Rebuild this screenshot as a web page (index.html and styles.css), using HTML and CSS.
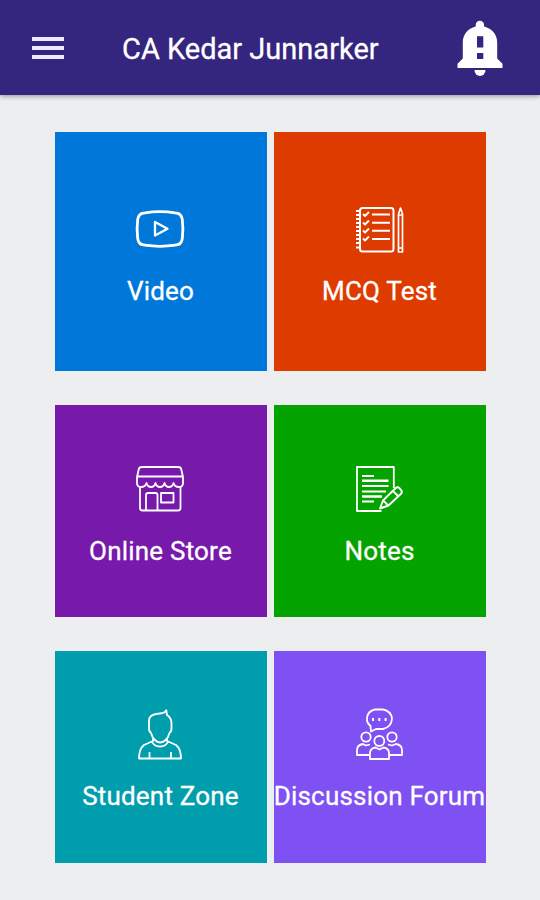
FILE: index.html
```html
<!DOCTYPE html>
<html lang="en">
<head>
  <meta charset="UTF-8">
  <meta name="viewport" content="width=device-width, initial-scale=1.0">
  <title>CA Kedar Junnarker</title>
  <link rel="stylesheet" href="styles.css">
</head>
<body>
  <header class="app-bar">
    <button class="menu-btn" aria-label="Menu">
      <span></span>
      <span></span>
      <span></span>
    </button>
    <h1 class="title">CA Kedar Junnarker</h1>
    <svg class="bell" viewBox="0 0 46 56" fill="#fff">
      <path d="M18.700 6.500V5a4.200 4.200 0 0 1 8.400 0v1.500C35 8.500 40.200 14.500 40.200 22.500v16l5.300 5.300v4.200H.5v-4.200l5.300-5.300v-16C5.800 14.500 10.800 8.500 18.700 6.500z"/>
      <path d="M17.500 50h11a5.500 6 0 0 1-11 0z"/>
      <path fill="#34257f" d="M20 16.300h6.300v11.200H20zM20 33h6.300v6H20z"/>
    </svg>
  </header>

  <main class="tiles">
    <a class="tile video">
      <svg class="icon" viewBox="0 0 80 70">
        <path stroke-width="2.800" d="M25 17.800Q40 15.600 55 17.800Q61.500 18 62.300 24.500Q63.500 34 62.300 43.500Q61.500 50 55 50.200Q40 52.400 25 50.200Q18.500 50 17.700 43.500Q16.500 34 17.700 24.500Q18.500 18 25 17.800z"/>
        <path stroke-width="2.300" d="M35 27v13.500l12.500-6.800z"/>
      </svg>
      <span class="label">Video</span>
    </a>

    <a class="tile mcq">
      <svg class="icon" viewBox="0 0 80 70">
        <rect x="20" y="13" width="33.500" height="43.500" rx="2.500" stroke-width="2"/>
        <path stroke-width="1.900" d="M16 16h5M16 20h5M16 24h5M16 28h5M16 32h5M16 36h5M16 40h5M16 44h5M16 48h5M16 52.500h5"/>
        <path stroke-width="1.900" d="M23 19l2 2 4-4M23 27.500l2 2 4-4M23 35.500l2 2 4-4M23 43.500l2 2 4-4M32 19.500h18M32 27.700h18M32 35.700h18M32 44h18"/>
        <path stroke-width="1.700" d="M58.500 57V19l2-6 2 6v38zM58.500 20h4M58.500 53h4"/>
      </svg>
      <span class="label">MCQ Test</span>
    </a>

    <a class="tile store">
      <svg class="icon" viewBox="0 0 80 70">
        <path d="M22 12h36q3 0 3.300 2.500L63 22v6q0 4-4 4-4.500 0-5.500-4-1 4-4.500 4t-4.500-4q-1 4-4.500 4t-4.500-4q-1 4-4.500 4t-4.500-4q-1 4-5.500 4-4 0-4-4v-6l1.700-7.500Q19 12 22 12zM17 21.500h46"/>
        <path d="M20 32v21q0 2.500 2.500 2.500H58q2.500 0 2.500-2.500V32M26 55V40q0-2 2-2h7.500q2 0 2 2v15M41 38h12.500v9.500H41z"/>
      </svg>
      <span class="label">Online Store</span>
    </a>

    <a class="tile notes">
      <svg class="icon" viewBox="0 0 80 70">
        <path d="M53.800 33V12H17v44h24.500"/>
        <path stroke-width="1.800" d="M22 21h12M22 31h26.500M22 36.500h24M22 46.500h12"/>
        <path stroke-width="2.600" d="M22 25.700h26.500M22 41.500h20"/>
        <path stroke-width="1.900" d="M40 53.500l3-8 12.500-12.200q2-2 4.200.2l1.300 1.300q1.700 2 0 4L48.500 50.500zM43 45.500l5.500 5M53 36l5.500 5.500"/>
      </svg>
      <span class="label">Notes</span>
    </a>

    <a class="tile student">
      <svg class="icon" viewBox="0 0 80 70">
        <path d="M29 27v-6q0-6 7-7 4-.5 7-1 2-.5 3.300-2.800L47 15q4.500 3 4.500 8v4q.5 4-2 6-1 4.500-4.500 7.500-5 4-9.500 0-3.500-3-4.500-7.500-2.500-2-2-6z"/>
        <path d="M33 38.500v2.500L24 45q-5 4-5 13.500h42q0-9.500-5-13.500l-9-4v-2.500M32 41.500q2 5 8 5t8-5M29.500 52v6M51 52v6"/>
      </svg>
      <span class="label">Student Zone</span>
    </a>

    <a class="tile forum">
      <svg class="icon" viewBox="0 0 80 70">
        <path d="M31 31.500l-.5-5.500q-4-3.500-3.500-7.500.5-7.500 8-9h8q8 1.500 9 9-.5 8.500-9 10.500h-7z"/>
        <path stroke-width="2" d="M33 18v3M39.300 18v3M45.600 18v3"/>
        <circle cx="26" cy="37" r="4.700"/>
        <circle cx="52" cy="37" r="4.700"/>
        <circle cx="39.300" cy="41" r="5"/>
        <path d="M30 55H17v-5q0-5 6-6l3 1.500 4-1M48.500 55H62v-5q0-5-6-6l-4 1.500-4-1M30 59v-6q0-4.500 5.500-5.500l4 2 4-2q5.500 1 5.500 5.500v6z"/>
      </svg>
      <span class="label">Discussion Forum</span>
    </a>
  </main>
</body>
</html>
```

FILE: styles.css
```css
* {
  box-sizing: border-box;
}

body {
  margin: 0;
  min-height: 900px;
  background-color: #eceef0;
  font-family: Roboto, sans-serif;
  color: #fff;
}

.app-bar {
  display: flex;
  align-items: center;
  height: 95px;
  padding: 0 37px 0 32px;
  background-color: #34257f;
  box-shadow: 0 1px 5px rgba(0, 0, 0, 0.4);
}

.menu-btn {
  display: flex;
  flex-direction: column;
  gap: 5px;
  width: 32px;
  padding: 0;
  border: 0;
  background: none;
}

.menu-btn span {
  height: 4px;
  background-color: #eeeaff;
}

.title {
  margin: 2px 0 0 58px;
  font-size: 29px;
  font-weight: 400;
  line-height: 36px;
  white-space: nowrap;
  -webkit-text-stroke: 0.3px #fff;
}

.bell {
  width: 46px;
  height: 56px;
  margin-left: auto;
}

.tiles {
  display: grid;
  grid-template-columns: 212px 212px;
  grid-template-rows: 239px 212px 212px;
  gap: 34px 7px;
  justify-content: center;
  padding-top: 37px;
}

.tile {
  display: flex;
  flex-direction: column;
  align-items: center;
  justify-content: center;
}

.icon {
  width: 80px;
  height: 70px;
  fill: none;
  stroke: #fff;
  stroke-width: 1.8;
  stroke-linejoin: round;
}

.tile:nth-child(odd) .icon {
  margin-right: 2px;
}

.label {
  margin-top: 11px;
  padding-bottom: 3px;
  font-size: 26px;
  line-height: 30px;
  letter-spacing: 0.2px;
  white-space: nowrap;
  -webkit-text-stroke: 0.3px #fff;
}

.store .label,
.notes .label {
  padding-bottom: 2px;
}

.video {
  background-color: #0078da;
}

.mcq {
  background-color: #dd3b00;
}

.store {
  background-color: #7719aa;
}

.notes {
  background-color: #04a300;
}

.student {
  background-color: #009dad;
}

.forum {
  background-color: #7f50f2;
}
```
